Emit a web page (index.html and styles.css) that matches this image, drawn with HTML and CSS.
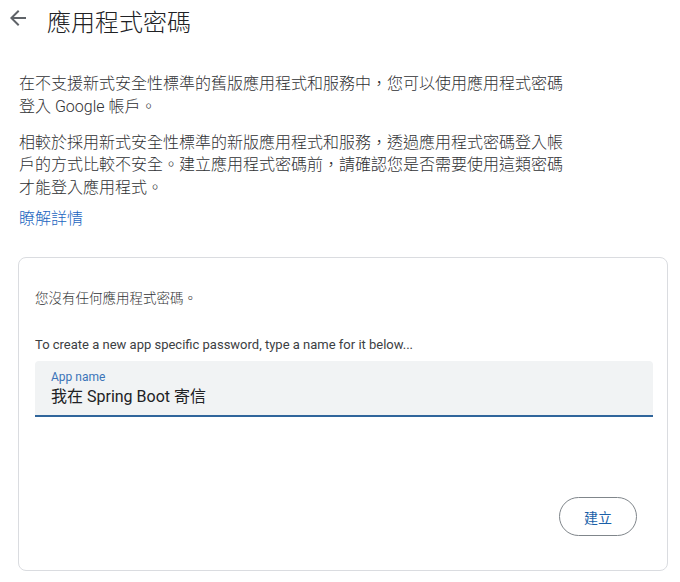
FILE: index.html
```html
<!DOCTYPE html>
<html lang="zh-Hant">
<head>
<meta charset="utf-8">
<link rel="stylesheet" href="styles.css">
</head>
<body>
<header class="top">
  <svg class="back" width="24" height="24" viewBox="0 0 24 24"><path d="M20 11H7.83l5.59-5.59L12 4l-8 8 8 8 1.41-1.41L7.83 13H20v-2z" fill="#5f6368"/></svg>
  <h1 class="title">應用程式密碼</h1>
</header>
<main class="content">
  <p class="para p1">在不支援新式安全性標準的舊版應用程式和服務中，您可以使用應用程式密碼<br>登入 Google 帳戶。</p>
  <p class="para p2">相較於採用新式安全性標準的新版應用程式和服務，透過應用程式密碼登入帳<br>戶的方式比較不安全。建立應用程式密碼前，請確認您是否需要使用這類密碼<br>才能登入應用程式。</p>
  <a class="learn" href="#">瞭解詳情</a>
  <section class="card">
    <p class="none">您沒有任何應用程式密碼。</p>
    <p class="hint">To create a new app specific password, type a name for it below...</p>
    <div class="field">
      <div class="label">App name</div>
      <div class="value">我在 Spring Boot 寄信</div>
    </div>
    <div class="actions">
      <button class="create">建立</button>
    </div>
  </section>
</main>
</body>
</html>
```

FILE: styles.css
```css
html, body {
  margin: 0;
  padding: 0;
  background: #ffffff;
}
body {
  font-family: Roboto, "Noto Sans CJK TC", sans-serif;
  color: #3c4043;
  width: 680px;
  height: 582px;
  overflow: hidden;
}
.top {
  display: flex;
  align-items: flex-start;
  padding-left: 6px;
  height: 46px;
}
.back {
  margin-top: 6px;
  flex: none;
}
.title {
  margin: 0 0 0 17px;
  padding-top: 7px;
  font-size: 24px;
  line-height: 32px;
  font-weight: 300;
  color: #202124;
}
.content {
  padding-left: 19px;
  display: flex;
  flex-direction: column;
}
.para {
  margin: 0;
  font-size: 16px;
  line-height: 22.5px;
  font-weight: 300;
  white-space: nowrap;
  color: #303134;
}
.p1 {
  margin-top: 27px;
}
.p2 {
  margin-top: 13.5px;
}
.learn {
  margin-top: 9px;
  font-size: 16px;
  line-height: 22.5px;
  font-weight: 300;
  color: #1a65c0;
  text-decoration: none;
  align-self: flex-start;
}
.card {
  margin-top: 26.5px;
  width: 650px;
  height: 314px;
  box-sizing: border-box;
  border: 1px solid #dadce0;
  border-radius: 8px;
  padding: 30px 14px 0 16px;
  margin-left: -1px;
  display: flex;
  flex-direction: column;
}
.none {
  margin: 0;
  font-size: 13.5px;
  line-height: 20px;
  font-weight: 300;
  color: #303134;
}
.hint {
  margin: 29px 0 0;
  font-size: 13px;
  line-height: 16px;
  font-weight: 400;
  color: #3c4043;
}
.field {
  margin-top: 8px;
  background: #f1f3f4;
  border-bottom: 2px solid #30659b;
  padding: 8px 16px 6px;
  border-radius: 4px 4px 0 0;
}
.label {
  font-size: 12px;
  line-height: 16px;
  color: #3b74b8;
}
.value {
  font-size: 16px;
  line-height: 24px;
  color: #202124;
}
.actions {
  display: flex;
  justify-content: flex-end;
  margin-top: 80px;
  padding-right: 16px;
}
.create {
  width: 78px;
  height: 39px;
  border: 1px solid #80868b;
  border-radius: 20px;
  background: #ffffff;
  font-family: Roboto, "Noto Sans CJK TC", sans-serif;
  font-size: 14px;
  color: #1a5fa8;
  padding: 0;
}
```
